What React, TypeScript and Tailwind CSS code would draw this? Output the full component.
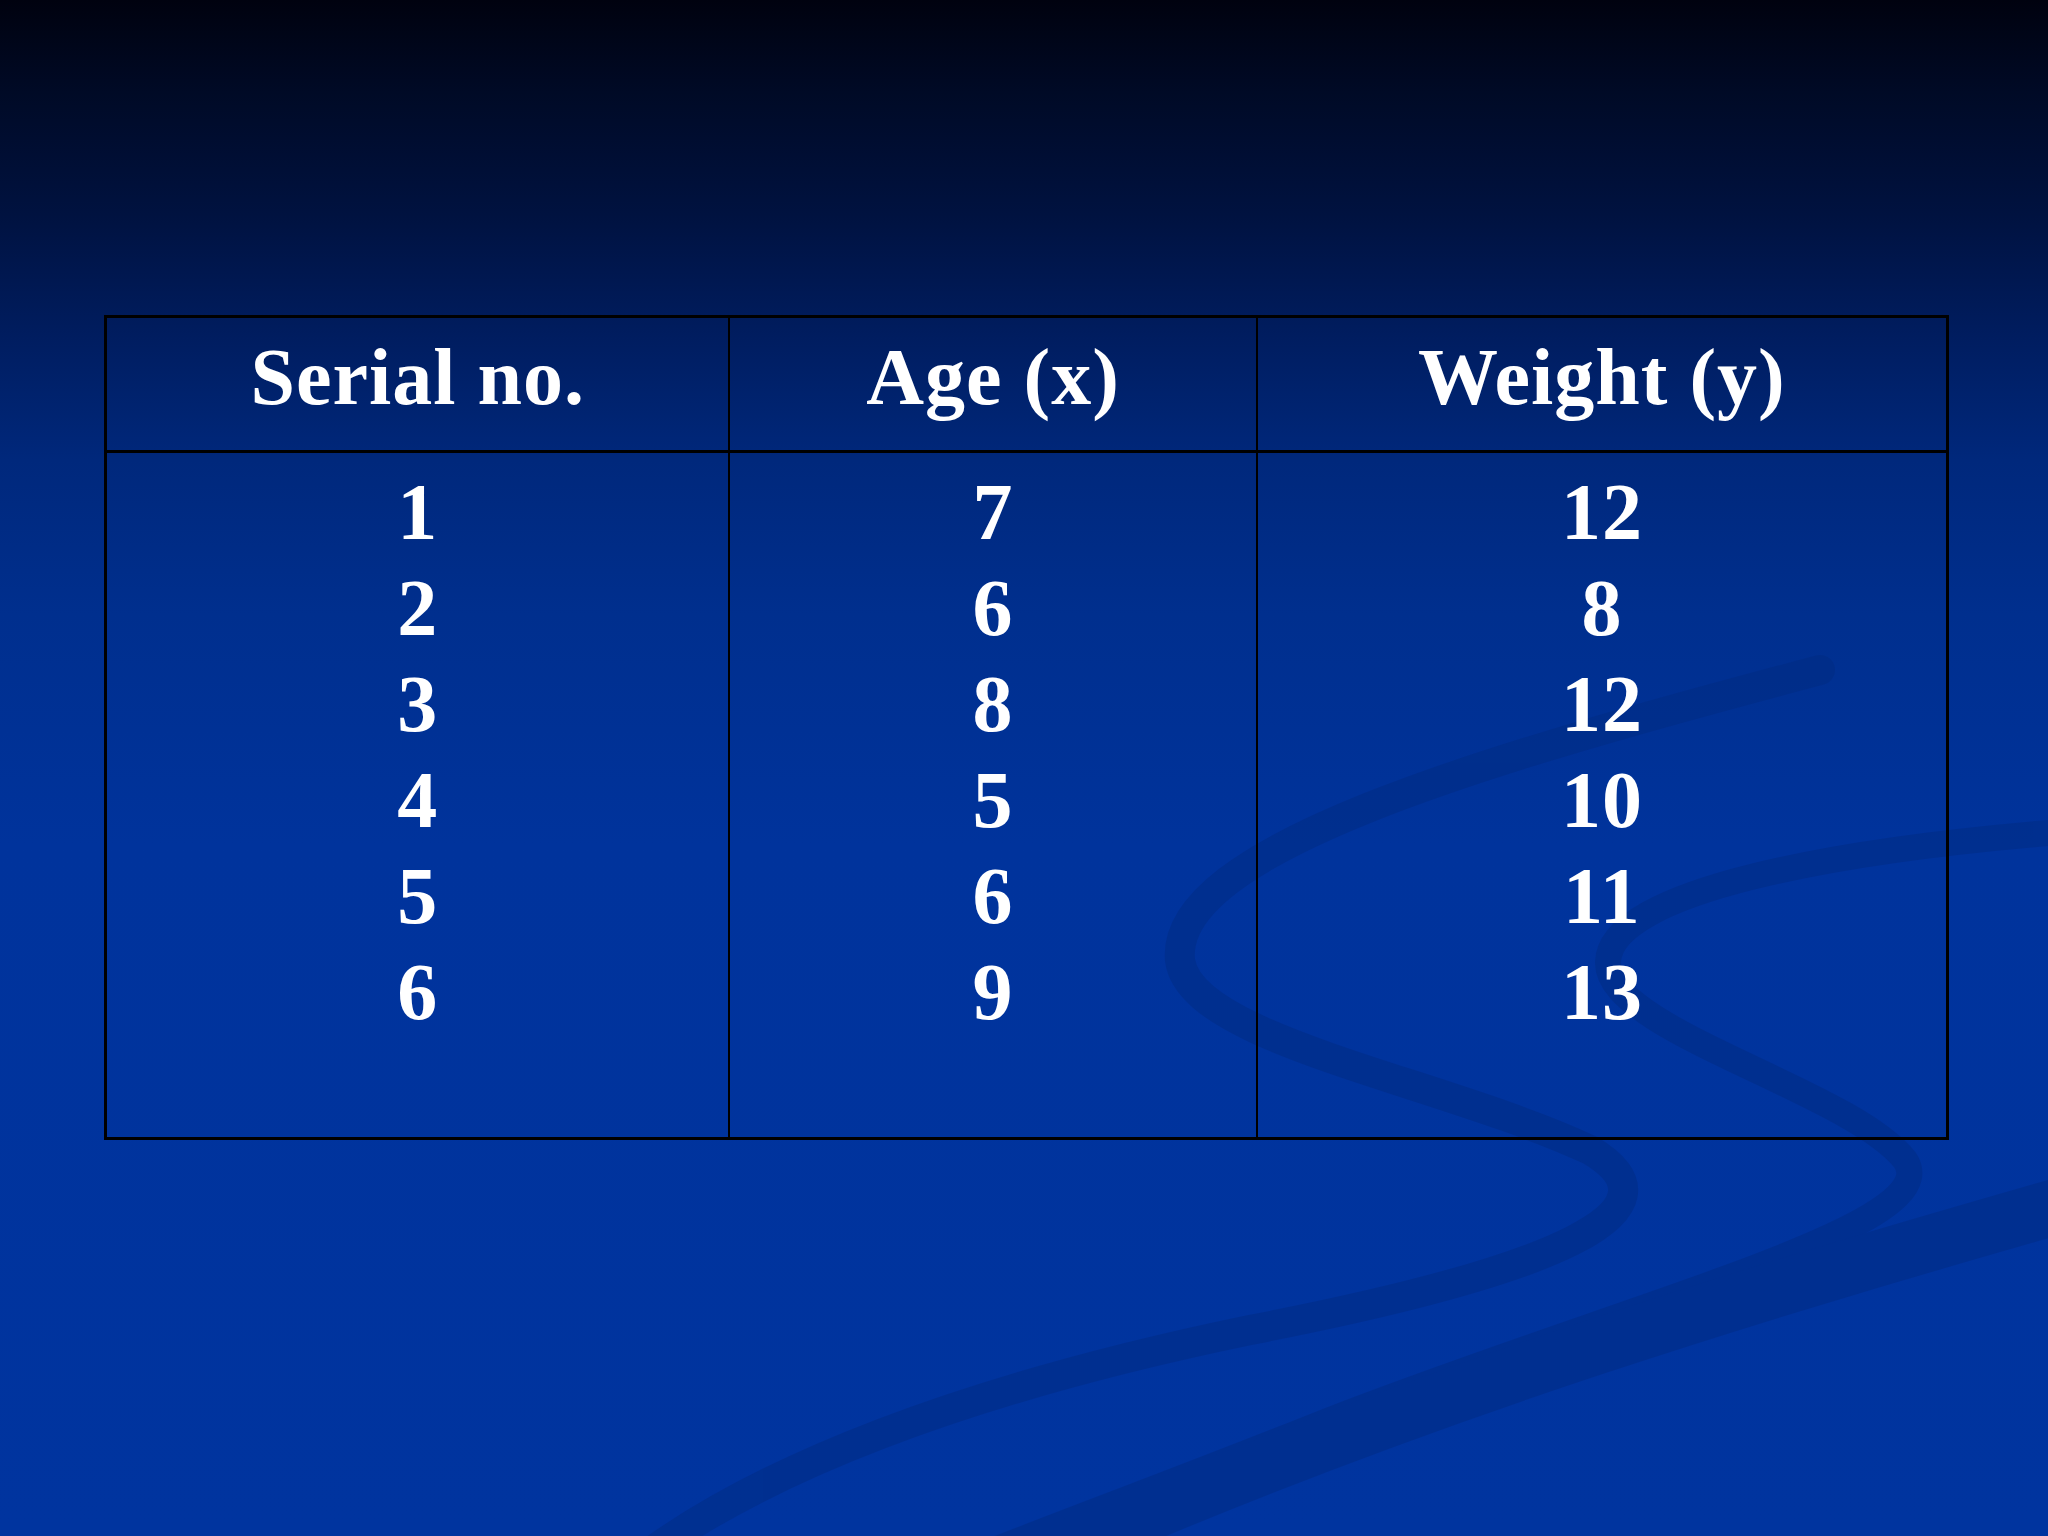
const headers = ["Serial no.", "Age (x)", "Weight (y)"];

const columns = [
  { width: "w-[622px]", values: ["1", "2", "3", "4", "5", "6"] },
  { width: "w-[528px]", values: ["7", "6", "8", "5", "6", "9"] },
  { width: "w-[691px]", values: ["12", "8", "12", "10", "11", "13"] },
];

// faint ribbons from the slide template
const Swooshes = () => (
  <svg
    className="absolute inset-0 h-full w-full"
    viewBox="0 0 2048 1536"
    preserveAspectRatio="none"
    fill="none"
  >
    <g stroke="#002a7c" strokeLinecap="round" opacity="0.4">
      <path
        d="M1820 670 C1480 760 1170 850 1180 960 C1190 1040 1440 1080 1590 1150 C1690 1210 1560 1270 1250 1330 C960 1390 760 1470 640 1560"
        strokeWidth="30"
      />
      <path
        d="M2060 832 C1840 850 1610 890 1608 962 C1606 1030 1850 1090 1905 1160 C1950 1225 1640 1300 1330 1420 C1130 1500 960 1560 900 1590"
        strokeWidth="26"
      />
      <path
        d="M2080 1200 C1800 1280 1420 1390 1040 1560"
        strokeWidth="56"
      />
    </g>
  </svg>
);

export default function App() {
  return (
    <div className="relative h-[1536px] w-[2048px] overflow-hidden bg-[linear-gradient(to_bottom,#00020f_0%,#000a26_6%,#001240_14%,#001d60_22%,#00287c_30%,#002f8e_40%,#00339c_55%,#00349f_100%)] [font-family:'Liberation_Serif','Times_New_Roman',serif]">
      <Swooshes />
      <div className="relative pl-[104px] pt-[315px]">
        <div className="flex w-[1845px] flex-col border-[3px] border-black text-white font-bold text-[80px] leading-[96px] tracking-[1px]">
          <div className="flex h-[135px] border-b-[3px] border-black">
            {headers.map((h, i) => (
              <div
                key={h}
                className={`${columns[i].width} pt-[11px] text-center ${i > 0 ? "border-l-2 border-black" : ""}`}
              >
                {h}
              </div>
            ))}
          </div>
          <div className="flex h-[684px]">
            {columns.map((col, i) => (
              <div
                key={i}
                className={`${col.width} pt-[11px] flex flex-col text-center ${i > 0 ? "border-l-2 border-black" : ""}`}
              >
                {col.values.map((v, j) => (
                  <span key={j}>{v}</span>
                ))}
              </div>
            ))}
          </div>
        </div>
      </div>
    </div>
  );
}
